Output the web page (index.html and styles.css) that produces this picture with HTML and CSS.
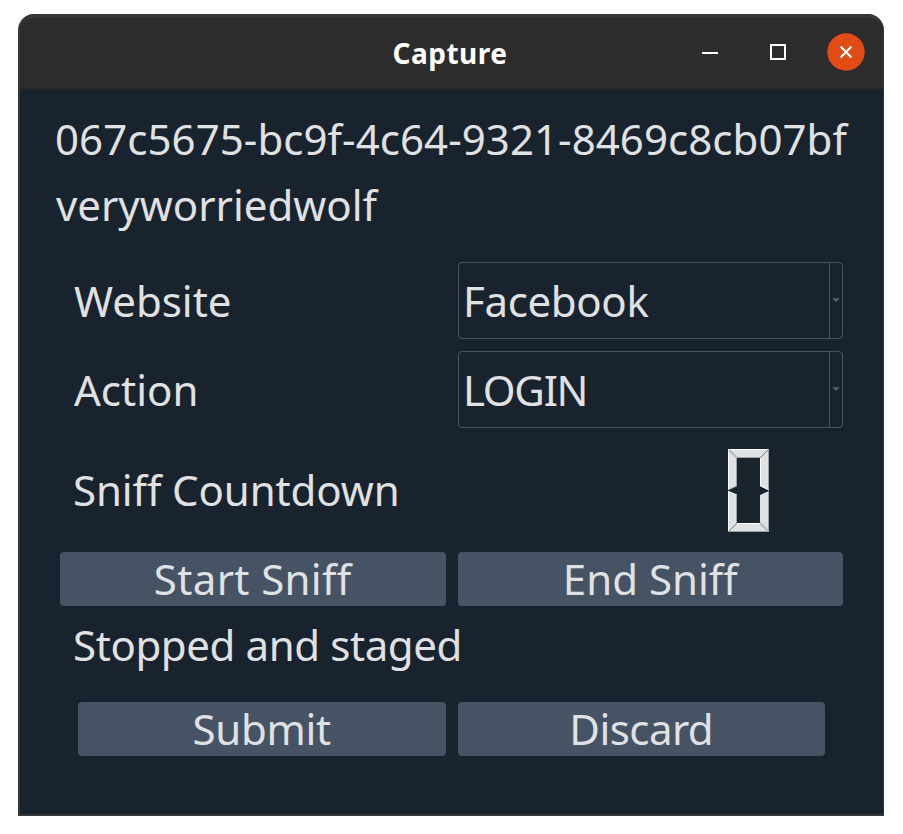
FILE: index.html
```
<!DOCTYPE html>
<html lang="en">
<head>
<meta charset="utf-8">
<title>Capture</title>
<link rel="stylesheet" href="styles.css">
</head>
<body>
<main class="window">
  <header class="titlebar">
    <h1 class="title">Capture</h1>
    <div class="controls">
      <svg width="16" height="16" viewBox="0 0 16 16"><path d="M0 9H16" stroke="#fff" stroke-width="2"/></svg>
      <svg width="16" height="16" viewBox="0 0 16 16"><rect x="1" y="1" width="14" height="14" fill="none" stroke="#fff" stroke-width="2"/></svg>
      <svg width="38" height="38" viewBox="0 0 38 38"><circle cx="19" cy="19" r="18.7" fill="#e04b16"/><path d="M13.6 13.6L24.4 24.4M24.4 13.6L13.6 24.4" stroke="#fff" stroke-width="2.1"/></svg>
    </div>
  </header>
  <section class="content">
    <div class="line capture-id">067c5675-bc9f-4c64-9321-8469c8cb07bf</div>
    <div class="line">veryworriedwolf</div>
    <div class="form">
      <div class="label">Website</div>
      <div class="combo"><span class="value website">Facebook</span><span class="arrow"><svg width="8" height="4" viewBox="0 0 8 4"><path d="M.3 .2H7.700L4 4Z" fill="#54616f"/></svg></span></div>
      <div class="label">Action</div>
      <div class="combo"><span class="value action">LOGIN</span><span class="arrow"><svg width="8" height="4" viewBox="0 0 8 4"><path d="M.3 .2H7.700L4 4Z" fill="#54616f"/></svg></span></div>
    </div>
    <div class="countdown">
      <div class="count-label">Sniff Countdown</div>
      <svg class="lcd" width="42" height="84" viewBox="0 0 42 84" role="img" aria-label="0">
        <path d="M0 0H41V37L41 41L32 37V9H9V37L0 41ZM0 42L9 46V74H32V46L41 42V83H0Z" fill="#e0e1e3"/>
        <path d="M.5 41V.5H41M32.500 9V37L41 41M.5 83V42.500L9 46M9 74.500H32" fill="none" stroke="#fff"/>
        <path d="M40.500 1V40M8.500 9V37L0 41M9 8.500H32M8.500 46V74M40.500 42V82.500H0" fill="none" stroke="#a0a1a3"/>
        <path d="M1 1L9 9M32 74L40 82" stroke="#b8b9bb" stroke-width="2"/>
        <path d="M32 9L40.500 .5M.5 82.500L9 74" stroke="#77797c"/>
      </svg>
    </div>
    <div class="buttons">
      <button class="btn start">Start Sniff</button>
      <button class="btn">End Sniff</button>
    </div>
    <div class="status">Stopped and staged</div>
    <div class="buttons inset">
      <button class="btn submit">Submit</button>
      <button class="btn discard">Discard</button>
    </div>
  </section>
</main>
</body>
</html>
```

FILE: styles.css
```
* { box-sizing: border-box; }
body { margin: 0; background: #fff; font-family: "Noto Sans", "Open Sans", sans-serif; }
.window {
  width: 866px;
  height: 802px;
  margin: 14px 0 0 18px;
  border: solid #373737;
  border-width: 0 1px 2px 2px;
  border-radius: 16px 16px 0 0;
  background: #19232d;
  overflow: hidden;
}
.titlebar {
  position: relative;
  height: 76px;
  border-top: 4px solid #373737;
  border-bottom: 2px solid #272727;
  border-radius: 16px 16px 0 0;
  background: #2c2c2c;
  color: #fff;
}
.title { margin: 0; padding-right: 3px; font-size: 28px; line-height: 70px; font-weight: 700; text-align: center; letter-spacing: .5px; }
.controls { position: absolute; top: 15px; right: 18px; display: flex; align-items: center; }
.controls svg { display: block; }
.controls svg + svg { margin-left: 52px; }
.controls svg:last-child { margin-left: 41px; }
.content { padding-top: 16px; color: #e0e1e3; font-size: 42px; }
.line { height: 66px; padding-left: 36px; line-height: 66px; white-space: nowrap; }
.capture-id { padding-left: 35px; letter-spacing: .06px; }
.form {
  display: grid;
  grid-template-columns: 384px 385px;
  grid-template-rows: 77px 77px;
  row-gap: 12px;
  padding: 24px 0 0 54px;
}
.label { line-height: 77px; white-space: nowrap; }
.combo { display: flex; border: 1px solid #455364; border-radius: 4px; line-height: 75px; height: 77px; }
.value { flex: 1; padding-left: 4px; }
.website { letter-spacing: -.35px; }
.action { letter-spacing: -1.3px; }
.arrow { width: 13px; height: 75px; padding-bottom: 1px; display: flex; align-items: center; justify-content: center; border-left: 1px solid #455364; }
.countdown { display: flex; justify-content: space-between; align-items: center; height: 84px; margin: 21px 113px 0 53px; }
.count-label { height: 84px; line-height: 81px; letter-spacing: -.1px; font-variant-ligatures: none; }
.lcd { display: block; }
.buttons { display: flex; gap: 12px; margin: 19px 40px 0; }
.btn {
  flex: 1;
  height: 54px;
  padding: 0;
  border: 0;
  border-radius: 4px;
  background: #455364;
  color: #e0e1e3;
  font: inherit;
  line-height: 54px;
}
.start { letter-spacing: .35px; }
.submit { letter-spacing: -.3px; }
.discard { letter-spacing: -.55px; }
.status { height: 76px; padding-left: 53px; line-height: 78px; letter-spacing: -.4px; }
.inset { margin: 20px 58px 0; }
```
